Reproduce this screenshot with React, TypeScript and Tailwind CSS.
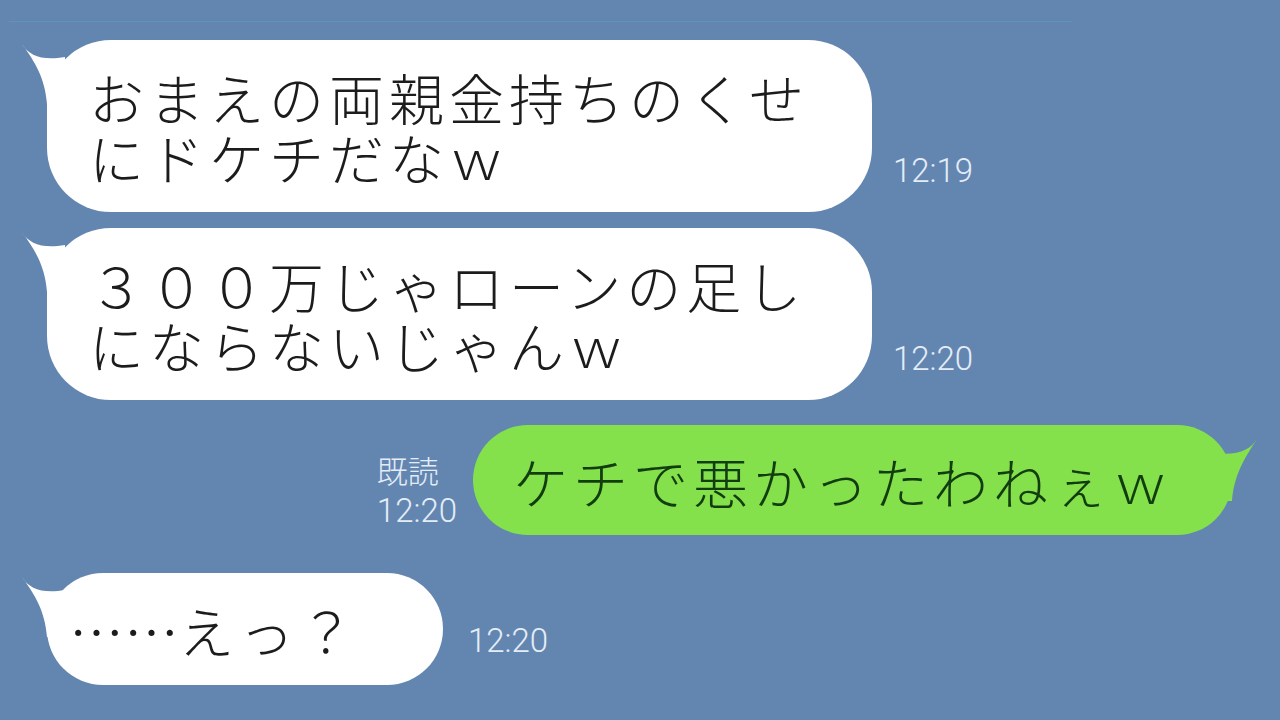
import React from "react";

const jp = "font-['Noto_Sans_CJK_JP','Noto_Sans',sans-serif]";
const timeFont = "font-['Roboto','Noto_Sans',sans-serif]";

const LeftTail = () => (
    <svg
        className="absolute left-[-26px] top-0"
        width="60"
        height="64"
        viewBox="0 0 60 64"
    >
        <path d="M1 4 C 8 16, 22 21, 44 17 L 44 64 L 26 64 C 24 38, 14 22, 1 4 Z" fill="#ffffff" />
    </svg>
);

const RightTail = () => (
    <svg
        className="absolute right-[-26px] top-[12px]"
        width="60"
        height="64"
        viewBox="0 0 60 64"
    >
        <path d="M59 2 C 52 13, 40 19, 16 16 L 16 64 L 34 64 C 36 38, 46 22, 59 2 Z" fill="#85e14b" />
    </svg>
);

type LeftMsgProps = {
    children: React.ReactNode;
    time: string;
    width: string;
    height: string;
    pad: string;
    gap: string;
    timeMb: string;
};

const LeftMsg = ({ children, time, width, height, pad, gap, timeMb }: LeftMsgProps) => (
    <div className={`flex items-end pl-[47px] ${gap}`}>
        <div className={`relative ${width} ${height} flex flex-col justify-center ${pad} bg-white rounded-[64px]`}>
            <LeftTail />
            <div className={`relative ${jp} font-light text-[55px] leading-[60px] tracking-[5px] text-[#1c1c1c] whitespace-nowrap`}>
                {children}
            </div>
        </div>
        <div className={`${timeFont} font-light text-[33px] leading-[33px] text-[#e4edf7] ${timeMb}`}>{time}</div>
    </div>
);

export default function App() {
    return (
        <div className="w-[1280px] h-[720px] bg-[#6386b1] overflow-hidden">
            <div className="pt-[21px] pl-[9px]">
                <div className="w-[1063px] h-px bg-[#5e95b3]" />
            </div>

            <div className="mt-[18px]">
                <LeftMsg time="12:19" width="w-[825px]" height="h-[172px]" pad="pl-[42px]" gap="gap-[21px]" timeMb="mb-[25px]">
                    <div>おまえの両親金持ちのくせ</div>
                    <div>にドケチだなｗ</div>
                </LeftMsg>
            </div>

            <div className="mt-[16px]">
                <LeftMsg time="12:20" width="w-[825px]" height="h-[172px]" pad="pl-[42px]" gap="gap-[21px]" timeMb="mb-[25px]">
                    <div>３００万じゃローンの足し</div>
                    <div>にならないじゃんｗ</div>
                </LeftMsg>
            </div>

            <div className="mt-[25px] flex items-end justify-end pr-[48px] gap-[16px]">
                <div className={`${timeFont} font-light text-[33px] leading-[41px] text-[#e4edf7] mb-[4px]`}>
                    <div className={`${jp} text-[31px]`}>既読</div>
                    <div>12:20</div>
                </div>
                <div className="relative w-[759px] h-[110px] flex items-center pl-[40px] bg-[#85e14b] rounded-[56px]">
                    <RightTail />
                    <div className={`relative ${jp} font-light text-[55px] leading-[60px] tracking-[5px] text-[#123d10] whitespace-nowrap`}>
                        ケチで悪かったわねぇｗ
                    </div>
                </div>
            </div>

            <div className="mt-[38px]">
                <LeftMsg time="12:20" width="w-[396px]" height="h-[112px]" pad="pl-[22px]" gap="gap-[25px]" timeMb="mb-[28px]">
                    <span className="tracking-[0px]">……</span>えっ？
                </LeftMsg>
            </div>
        </div>
    );
}
